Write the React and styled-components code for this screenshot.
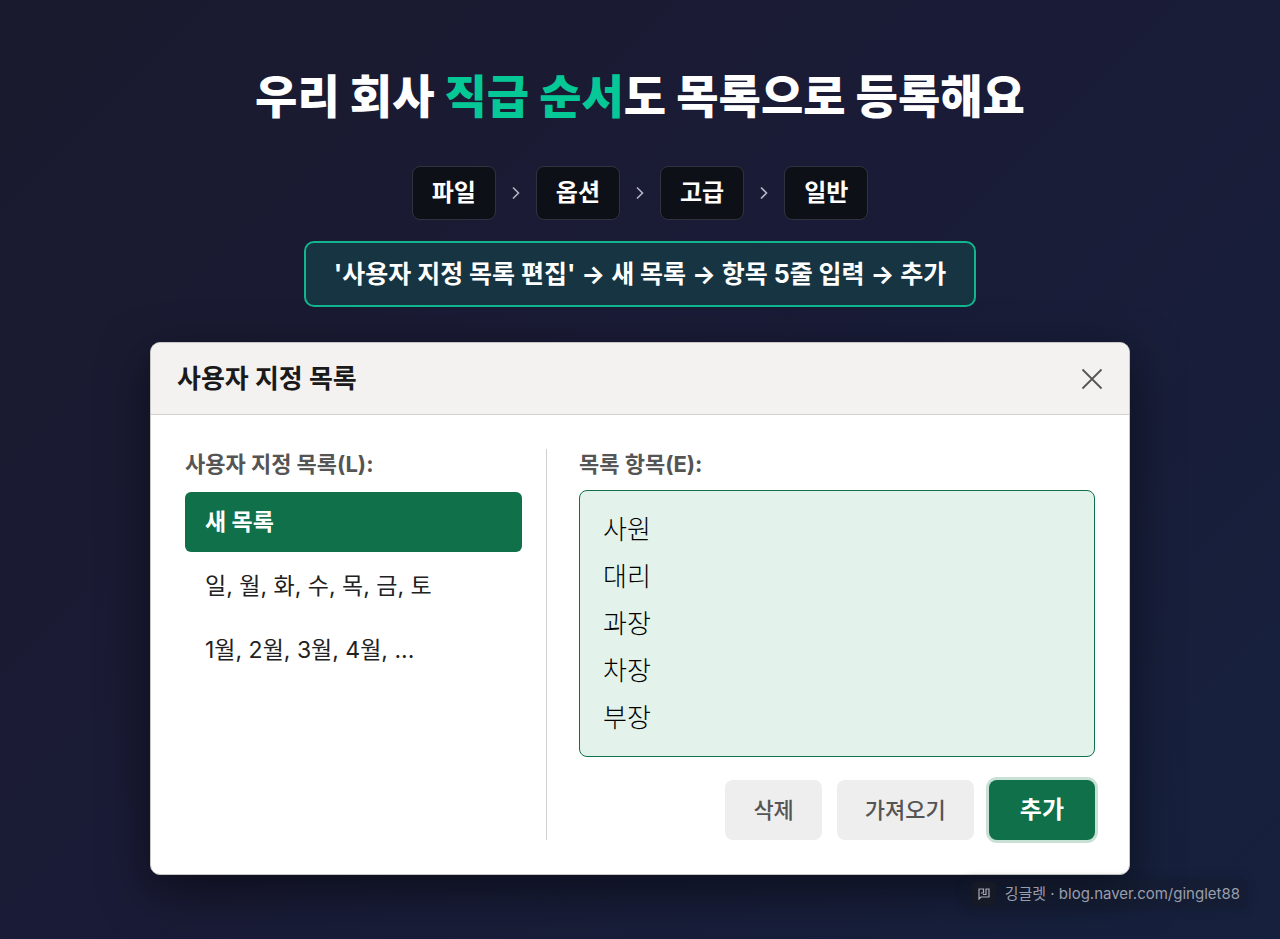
import React, { useState } from 'react';
import styled, { createGlobalStyle } from 'styled-components';

const GlobalStyle = createGlobalStyle`
  *, *::before, *::after {
    box-sizing: border-box;
  }

  body {
    margin: 0;
    background-color: #16213e;
    font-family: Inter, "Noto Sans CJK KR", sans-serif;
  }

  button, textarea {
    font-family: inherit;
  }
`;

const Page = styled.div`
  display: flex;
  flex-direction: column;
  align-items: center;
  min-height: 100vh;
  padding: 60px 32px 0;
  background: linear-gradient(135deg, #1a1a2e 0%, #1a1b36 45%, #16213e 100%);
`;

const Title = styled.h1`
  margin: 0 0 34px;
  color: #ffffff;
  font-size: 46px;
  font-weight: 800;
  line-height: 72px;
  text-align: center;
`;

const Accent = styled.span`
  color: #06c896;
`;

const Breadcrumb = styled.ol`
  display: flex;
  align-items: center;
  justify-content: center;
  gap: 15px;
  margin: 0 0 21px;
  padding: 0;
  list-style: none;
`;

const Crumb = styled.li`
  display: flex;
  align-items: center;
  gap: 15px;
`;

const Chip = styled.span`
  padding: 9px 19px;
  border: 1px solid #30333f;
  border-radius: 8px;
  background-color: #0d1117;
  color: #ffffff;
  font-size: 24px;
  font-weight: 600;
  line-height: 34px;
`;

const Guide = styled.p`
  margin: 0 0 35px;
  padding: 14px 28px;
  border: 2px solid #12b68e;
  border-radius: 10px;
  background-color: #163441;
  color: #ffffff;
  font-size: 25px;
  font-weight: 700;
  line-height: 34px;
  text-align: center;
`;

const Dialog = styled.section`
  width: 100%;
  max-width: 980px;
  border: 1px solid #c8c6c4;
  border-radius: 10px;
  background-color: #ffffff;
  box-shadow: 0 16px 48px rgba(0, 0, 0, 0.5);
  overflow: hidden;
`;

const DialogHeader = styled.header`
  display: flex;
  align-items: center;
  justify-content: space-between;
  padding: 16px 26px;
  border-bottom: 1px solid #d2d0ce;
  background-color: #f3f2f1;
`;

const DialogTitle = styled.h2`
  margin: 0;
  color: #1a1a1a;
  font-size: 26px;
  font-weight: 700;
  line-height: 39px;
`;

const CloseButton = styled.button`
  display: flex;
  padding: 0;
  border: none;
  background: none;
  color: #555555;
  cursor: pointer;
`;

const DialogBody = styled.div`
  display: grid;
  grid-template-columns: 362px 1fr;
  gap: 32px;
  padding: 34px;
`;

const ListColumn = styled.div`
  padding-right: 24px;
  border-right: 1px solid #d2d0ce;
`;

const Label = styled.label`
  display: block;
  margin-bottom: 11px;
  color: #555555;
  font-size: 22px;
  font-weight: 700;
  line-height: 30px;
`;

const List = styled.div`
  display: flex;
  flex-direction: column;
  gap: 4px;
  padding: 2px 0;
`;

const ListItem = styled.button`
  padding: 13px 20px;
  border: none;
  border-radius: 6px;
  background-color: ${props => props.$active ? '#0f704a' : 'transparent'};
  color: ${props => props.$active ? '#ffffff' : '#222222'};
  font-size: 23px;
  font-weight: ${props => props.$active ? 700 : 400};
  line-height: 34px;
  text-align: left;
  cursor: pointer;
`;

const ItemsInput = styled.textarea`
  display: block;
  width: 100%;
  padding: 15px 23px;
  border: 1px solid #0f704a;
  border-radius: 8px;
  outline: none;
  background-color: #e3f2ea;
  color: #000000;
  font-size: 26px;
  font-weight: 300;
  line-height: 47px;
  resize: none;
  overflow: hidden;
`;

const Actions = styled.div`
  display: flex;
  justify-content: flex-end;
  gap: 15px;
  margin-top: 23px;
`;

const ActionButton = styled.button`
  padding: 13px ${props => props.$primary ? '31px' : '28px'};
  border: none;
  border-radius: 8px;
  background-color: ${props => props.$primary ? '#0f704a' : '#eeeeee'};
  box-shadow: ${props => props.$primary ? '0 0 0 3px #c9e0d6' : 'none'};
  color: ${props => props.$primary ? '#ffffff' : '#555555'};
  font-size: ${props => props.$primary ? '24px' : '22px'};
  font-weight: ${props => props.$primary ? 700 : 500};
  line-height: 34px;
  cursor: pointer;
`;

const Credit = styled.footer`
  display: flex;
  align-items: center;
  align-self: flex-end;
  gap: 9px;
  margin-top: 4px;
  padding: 3px 8px;
  border-radius: 8px;
  background-color: rgba(17, 24, 39, 0.4);
  box-shadow: 0 0 8px rgba(17, 24, 39, 0.4);
  color: #9a9daa;
  font-size: 15px;
  line-height: 24px;
`;

const CreditIcon = styled.span`
  display: flex;
  padding: 6px;
  border-radius: 4px;
  background-color: #161a26;
`;

const path = ['파일', '옵션', '고급', '일반'];
const lists = ['새 목록', '일, 월, 화, 수, 목, 금, 토', '1월, 2월, 3월, 4월, ...'];

const Chevron = () => (
  <svg width="10" height="14" viewBox="0 0 10 14" fill="none" stroke="#b4b5c3" strokeWidth="1.6" aria-hidden="true">
    <path d="M2 1.5L7.5 7 2 12.5"/>
  </svg>
);

const App = () => {
  const [selected, setSelected] = useState(0);

  return (
    <>
      <GlobalStyle/>
      <Page>
        <Title>우리 회사 <Accent>직급 순서</Accent>도 목록으로 등록해요</Title>
        <Breadcrumb>
          {path.map((name, i) => (
            <Crumb key={name}>
              {i > 0 && <Chevron/>}
              <Chip>{name}</Chip>
            </Crumb>
          ))}
        </Breadcrumb>
        <Guide>'사용자 지정 목록 편집' → 새 목록 → 항목 5줄 입력 → 추가</Guide>
        <Dialog aria-labelledby="dialog-title">
          <DialogHeader>
            <DialogTitle id="dialog-title">사용자 지정 목록</DialogTitle>
            <CloseButton type="button" aria-label="닫기">
              <svg width="22" height="22" viewBox="0 0 22 22" fill="none" stroke="currentColor" strokeWidth="1.8">
                <path d="M1.5 1.5l19 19M20.5 1.5l-19 19"/>
              </svg>
            </CloseButton>
          </DialogHeader>
          <DialogBody>
            <ListColumn>
              <Label as="div" id="lists-label">사용자 지정 목록(L):</Label>
              <List role="group" aria-labelledby="lists-label">
                {lists.map((name, i) => (
                  <ListItem
                    key={name}
                    type="button"
                    aria-pressed={selected === i}
                    $active={selected === i}
                    onClick={() => setSelected(i)}
                  >
                    {name}
                  </ListItem>
                ))}
              </List>
            </ListColumn>
            <div>
              <Label htmlFor="items">목록 항목(E):</Label>
              <ItemsInput id="items" rows={5} spellCheck={false} defaultValue={'사원\n대리\n과장\n차장\n부장'}/>
              <Actions>
                <ActionButton type="button">삭제</ActionButton>
                <ActionButton type="button">가져오기</ActionButton>
                <ActionButton type="button" $primary>추가</ActionButton>
              </Actions>
            </div>
          </DialogBody>
        </Dialog>
        <Credit>
          <CreditIcon>
            <svg width="12" height="12" viewBox="0 0 12 12" fill="none" stroke="#a9abb6" strokeWidth="1.2" aria-hidden="true">
              <path d="M3 5h2.5V1H1v10l2-2h8V1H8v5.500H5"/>
            </svg>
          </CreditIcon>
          <span>깅글렛 · blog.naver.com/ginglet88</span>
        </Credit>
      </Page>
    </>
  );
};

export default App;
